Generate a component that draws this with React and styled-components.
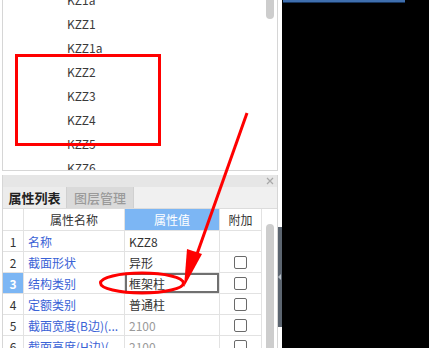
import React from "react";
import styled, { createGlobalStyle } from "styled-components";

const GlobalStyle = createGlobalStyle`
  html, body { margin: 0; padding: 0; background: #000; }
  body { font-family: "Noto Sans CJK SC", "Noto Sans", sans-serif; font-size: 12px; }
  #root { width: 429px; height: 348px; overflow: hidden; }
`;

const Page = styled.div`
  position: relative;
  display: flex;
  width: 429px;
  height: 348px;
  overflow: hidden;
`;

const LeftPane = styled.div`
  width: 282px;
  background: #fff;
  display: flex;
`;

const Content = styled.div`
  width: 278px;
  display: flex;
  flex-direction: column;
  min-height: 0;
`;

const ListPanel = styled.div`
  margin-left: 2px;
  width: 276px;
  height: 171px;
  flex-shrink: 0;
  box-sizing: border-box;
  border: 1px solid #d6d6d6;
  border-top: none;
  overflow: hidden;
  display: flex;
`;

const ItemList = styled.div`
  flex: 1;
  margin-top: -12px;
`;

const Item = styled.div`
  height: 24px;
  line-height: 24px;
  padding-left: 64px;
  color: #3a3a3a;
  font-size: 12px;
`;

const ListScroll = styled.div`
  width: 14px;
`;

const ListThumb = styled.div`
  margin-left: 3px;
  width: 8px;
  height: 19px;
  background: #cdcdcd;
  border-radius: 0 0 4px 4px;
`;

const LowerPanel = styled.div`
  margin-top: 4px;
  margin-left: 2px;
  width: 276px;
  flex: 1;
  min-height: 0;
  box-sizing: border-box;
  border-left: 1px solid #d6d6d6;
  border-right: 1px solid #d6d6d6;
  display: flex;
  flex-direction: column;
  overflow: hidden;
`;

const TitleBar = styled.div`
  height: 12px;
  flex-shrink: 0;
  background: #e6e6e6;
  display: flex;
  justify-content: flex-end;
  align-items: center;
  padding-right: 3px;
`;

const TabBar = styled.div`
  height: 22px;
  flex-shrink: 0;
  box-sizing: border-box;
  background: #f0f0f0;
  border-bottom: 1px solid #dcdcdc;
  display: flex;
`;

const Tab = styled.div`
  width: ${p => p.$w}px;
  display: flex;
  align-items: center;
  justify-content: center;
  font-size: 13px;
  background: ${p => (p.$active ? "#ececec" : "#dadada")};
  color: ${p => (p.$active ? "#222" : "#9a9a9a")};
  font-weight: ${p => (p.$active ? 700 : 500)};
  border-right: 1px solid #d0d0d0;
`;

const TableArea = styled.div`
  flex: 1;
  display: flex;
  min-height: 0;
`;

const Grid = styled.div`
  width: 259px;
  display: flex;
  flex-direction: column;
`;

const Row = styled.div`
  display: grid;
  grid-template-columns: 21px 101px 95px 42px;
  height: ${p => (p.$head ? 22 : 21)}px;
  box-sizing: border-box;
  border-bottom: 1px solid #e2e2e2;
  flex-shrink: 0;
`;

const Cell = styled.div`
  box-sizing: border-box;
  border-right: 1px solid #e2e2e2;
  display: flex;
  align-items: center;
  justify-content: ${p => (p.$center ? "center" : "flex-start")};
  padding-left: ${p => (p.$center ? 0 : 4)}px;
  white-space: nowrap;
  overflow: hidden;
  font-size: 12px;
  color: ${p => p.$color || "#333"};
  background: ${p => p.$bg || "#fff"};
  font-weight: ${p => (p.$bold ? 700 : 400)};
  box-shadow: ${p => (p.$editing ? "inset 0 0 0 2px #707070" : "none")};
`;

const Checkbox = styled.span`
  width: 13px;
  height: 13px;
  box-sizing: border-box;
  border: 1px solid #6a6a6a;
  border-radius: 2px;
  background: #fff;
`;

const TableScroll = styled.div`
  flex: 1;
  padding-top: 15px;
`;

const TableThumb = styled.div`
  margin-left: 4px;
  width: 8px;
  height: 200px;
  background: #cdcdcd;
  border-radius: 4px 4px 0 0;
`;

const Splitter = styled.div`
  width: 4px;
  background: #fff;
`;

const SplitHandle = styled.div`
  margin-top: 227px;
  height: 100px;
  background: #5c6570;
  display: flex;
  align-items: center;
`;

const RightPane = styled.div`
  flex: 1;
  background: #000;
`;

const TopBar = styled.div`
  margin-left: 1px;
  width: 122px;
  height: 2px;
  background: #3f6fae;
  border-bottom: 1px solid #17355e;
`;

const Overlay = styled.svg`
  position: absolute;
  left: 0;
  top: 0;
  pointer-events: none;
`;

const items = ["KZ1a", "KZZ1", "KZZ1a", "KZZ2", "KZZ3", "KZZ4", "KZZ5", "KZZ6"];

const rows = [
  { n: "1", name: "名称", value: "KZZ8", check: false },
  { n: "2", name: "截面形状", value: "异形", check: true },
  { n: "3", name: "结构类别", value: "框架柱", check: true, selected: true },
  { n: "4", name: "定额类别", value: "普通柱", check: true },
  { n: "5", name: "截面宽度(B边)(...", value: "2100", check: true, grey: true },
  { n: "6", name: "截面高度(H边)(...", value: "2100", check: true, grey: true },
];

export default function App() {
  return (
    <>
      <GlobalStyle />
      <Page>
        <LeftPane>
          <Content>
            <ListPanel>
              <ItemList>
                {items.map(t => (
                  <Item key={t}>{t}</Item>
                ))}
              </ItemList>
              <ListScroll>
                <ListThumb />
              </ListScroll>
            </ListPanel>
            <LowerPanel>
              <TitleBar>
                <svg width="8" height="8" viewBox="0 0 8 8">
                  <path d="M1 1 L7 7 M7 1 L1 7" stroke="#a8a8a8" strokeWidth="1.2" />
                </svg>
              </TitleBar>
              <TabBar>
                <Tab $active $w={63}>属性列表</Tab>
                <Tab $w={66}>图层管理</Tab>
              </TabBar>
              <TableArea>
                <Grid>
                  <Row $head>
                    <Cell $center />
                    <Cell $center>属性名称</Cell>
                    <Cell $center $bg="#7cb6f4" $color="#fff">属性值</Cell>
                    <Cell $center>附加</Cell>
                  </Row>
                  {rows.map(r => (
                    <Row key={r.n}>
                      <Cell
                        $center
                        $bg={r.selected ? "#7cb6f4" : "#fff"}
                        $color={r.selected ? "#fff" : "#333"}
                        $bold={r.selected}
                      >
                        {r.n}
                      </Cell>
                      <Cell $color="#3a62d6">{r.name}</Cell>
                      <Cell $color={r.grey ? "#9a9a9a" : "#333"} $editing={r.selected}>
                        {r.value}
                      </Cell>
                      <Cell $center>{r.check && <Checkbox />}</Cell>
                    </Row>
                  ))}
                </Grid>
                <TableScroll>
                  <TableThumb />
                </TableScroll>
              </TableArea>
            </LowerPanel>
          </Content>
          <Splitter>
            <SplitHandle>
              <svg width="3" height="6" viewBox="0 0 3 6">
                <path d="M0 3 L3 0 L3 6 Z" fill="#b8c0c8" />
              </svg>
            </SplitHandle>
          </Splitter>
        </LeftPane>
        <RightPane>
          <TopBar />
        </RightPane>
        <Overlay width="429" height="348" viewBox="0 0 429 348">
          <rect x="16.5" y="55.5" width="143" height="89" fill="none" stroke="#ff0000" strokeWidth="3" />
          <ellipse cx="142" cy="283" rx="41.5" ry="10" fill="none" stroke="#ff0000" strokeWidth="3" />
          <line x1="247" y1="113" x2="197" y2="254" stroke="#ff0000" strokeWidth="3" />
          <polygon points="187,249 202,254 184,287" fill="#ff0000" />
        </Overlay>
      </Page>
    </>
  );
}
